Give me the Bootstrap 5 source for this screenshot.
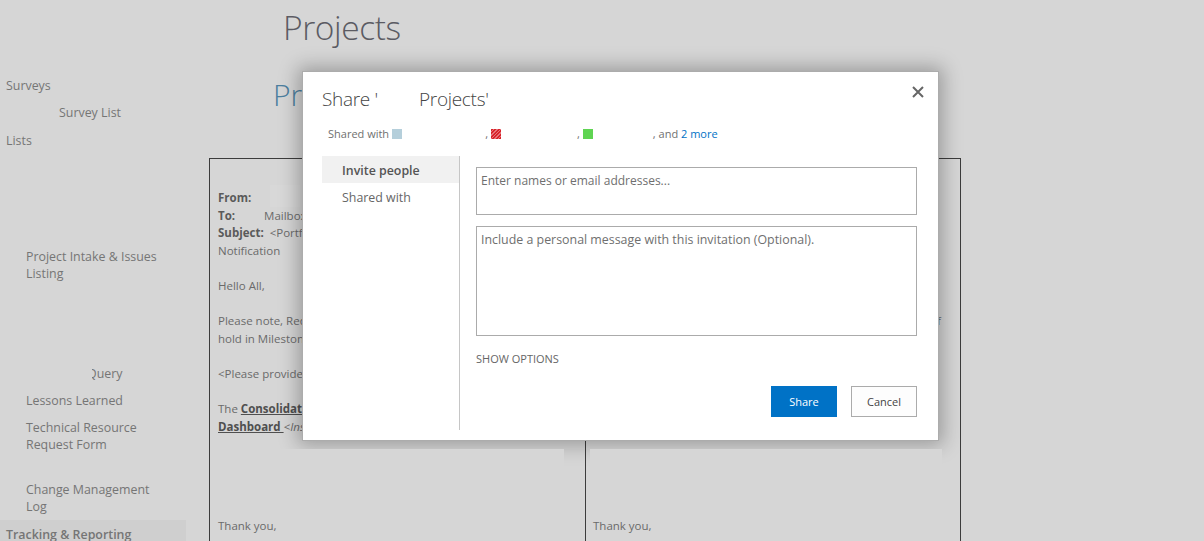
<!DOCTYPE html>
<html lang="en">
<head>
<meta charset="utf-8">
<title>Share Projects</title>
<link href="https://cdn.jsdelivr.net/npm/bootstrap@5.3.0/dist/css/bootstrap.min.css" rel="stylesheet">
<style>
html,body{height:541px;overflow:hidden}
body{background:#d6d6d6;font-family:"Open Sans","Noto Sans","Liberation Sans",sans-serif;font-size:12.4px;color:#757575;position:relative}
.page-wrap{height:541px;overflow:hidden}
.side-col{width:186px;flex:none;padding-top:77px;line-height:17px}
.side-item{padding-left:26px}
.side-top{padding-left:6px}
.side-sub{padding-left:59px;margin-top:10px}
.side-lists{margin-top:11px}
.side-intake{margin-top:99px}
.side-query{margin:83px 0 0 87px;position:relative}
.side-query::before{content:"";position:absolute;left:-2px;top:0;width:7px;height:17px;background:#d6d6d6}
.side-lessons{margin-top:10px}
.side-tech{margin-top:10px}
.side-change{margin-top:28px}
.side-track{margin-top:5px;padding:6px 6px 0;background:#cfcfcf;font-weight:600;height:30px}
.main-col{width:775px;flex:none}
.site-title{font-size:33.5px;font-weight:300;color:#5b5b63;margin:4px 0 0 97px;line-height:46px;letter-spacing:-.4px}
.sub-title{font-size:30px;font-weight:300;color:#4d7f9f;margin:22px 0 0 87px;line-height:46px}
.mail-box{margin:40px 0 0 23px;width:752px;border:1px solid #3c3c3c;height:420px}
.mail-cell{width:375px;flex:none;padding:30px 8px 0;font-size:11.5px;line-height:17.6px;color:#6a6a6a;position:relative}
.mail-cell+.mail-cell{border-left:1px solid #3c3c3c;width:376px;padding-left:7px}
.mail-cell b{color:#5a5a5a;font-weight:700}
.mail-cell u{color:#4f4f4f;font-weight:700}
.from-patch{background:#d8d8d8;width:30px;height:22px;position:absolute;left:60px;top:26px}
.foot-patch{background:#d6d6d6;height:22px;position:absolute;top:290px;z-index:2}
.mail-thanks{position:absolute;top:358px}
.to-gap{padding-left:26px}
.tail-line{padding-top:123px;text-align:right;margin-right:12px}
.share-dlg{position:absolute;z-index:1;left:302px;top:71px;width:637px;height:370px;background:#fff;border:1px solid #acacac;border-radius:0;box-shadow:0 0 18px 4px rgba(0,0,0,.28);padding:0 21px 0 19px;color:#666}
.dlg-title{font-size:19px;font-weight:300;color:#444;margin:15px 0 0;line-height:25px;letter-spacing:-.3px;white-space:nowrap}
.dlg-title span{display:inline-block;margin-left:41px}
.dlg-x{position:absolute;right:14px;top:14px;width:12px;height:12px;padding:0;background:none;border:0;line-height:0}
.shared-line{margin:13px 0 0 6px;font-size:11px;line-height:17px;height:17px;color:#707070;white-space:nowrap}
.chip{display:inline-block;width:10px;height:10px;vertical-align:-1px;margin-left:3px}
.chip-blue{background:#b5cfdb}
.chip-red{background:repeating-linear-gradient(135deg,#d8232a 0 1.5px,#e8737a 1.5px 2.5px)}
.chip-green{background:#5fd452}
.gap-a{margin-left:83px}.gap-b{margin-left:76px}.gap-c{margin-left:60px}
.shared-line a{color:#0072c6;text-decoration:none}
.dlg-body{margin-top:14px;height:274px}
.dlg-tabs{width:138px;flex:none;border-right:1px solid #c6c6c6}
.dlg-tab{display:block;padding:1px 0 0 20px;height:27px;line-height:27px;font-size:12.4px;color:#666;text-decoration:none}
.dlg-tab.sel{background:#f1f1f1;font-weight:600;color:#555}
.dlg-form{padding:11px 0 0 16px;flex:1;min-width:0}
.dlg-form .form-control{border:1px solid #ababab;border-radius:0;padding:3px 4px;line-height:19px;color:#444;resize:none;box-shadow:none}
.dlg-form .form-control::placeholder{color:#6f6f6f;opacity:1}
.in-names{height:48px;font-size:12px}
.in-msg{height:110px;margin-top:11px;font-size:12.4px}
.show-opt{margin-top:15px;font-size:11px;line-height:16px;color:#666}
.dlg-actions{margin-top:19px;gap:14px}
.dlg-btn{width:66px;height:31px;border-radius:0;font-size:11px;padding:0;line-height:29px}
.dlg-btn.go{background:#0072c6;border:1px solid #0072c6;color:#fff}
.dlg-btn.stop{background:#fdfdfd;border:1px solid #ababab;color:#444}
</style>
</head>
<body>
<div class="page-wrap d-flex">
  <nav class="side-col">
    <div class="side-top">Surveys</div>
    <div class="side-sub">Survey List</div>
    <div class="side-top side-lists">Lists</div>
    <div class="side-item side-intake">Project Intake &amp; Issues<br>Listing</div>
    <div class="side-query">Query</div>
    <div class="side-item side-lessons">Lessons Learned</div>
    <div class="side-item side-tech">Technical Resource<br>Request Form</div>
    <div class="side-item side-change">Change Management<br>Log</div>
    <div class="side-track">Tracking &amp; Reporting</div>
  </nav>
  <main class="main-col">
    <h1 class="site-title">Projects</h1>
    <h2 class="sub-title">Projects</h2>
    <div class="mail-box d-flex">
      <div class="mail-cell">
        <div class="from-patch"></div>
        <div class="text-nowrap"><b>From:</b></div>
        <div class="text-nowrap"><b>To:</b> <span class="to-gap">Mailbox</span></div>
        <div class="text-nowrap"><b>Subject:</b>&nbsp; &lt;Portfolio&gt;</div>
        <div>Notification</div>
        <div>&nbsp;</div>
        <div>Hello All,</div>
        <div>&nbsp;</div>
        <div class="text-nowrap">Please note, Request</div>
        <div class="text-nowrap">hold in Milestone</div>
        <div>&nbsp;</div>
        <div class="text-nowrap">&lt;Please provide details&gt;</div>
        <div>&nbsp;</div>
        <div class="text-nowrap">The <u>Consolidated</u></div>
        <div class="text-nowrap"><u>Dashboard </u><i>&lt;Insert&gt;</i></div>
        <div class="foot-patch" style="left:70px;width:284px"></div>
        <div class="mail-thanks">Thank you,</div>
      </div>
      <div class="mail-cell">
        <div class="tail-line">of</div>
        <div class="foot-patch" style="left:4px;width:352px"></div>
        <div class="mail-thanks">Thank you,</div>
      </div>
    </div>
  </main>
</div>

<section class="share-dlg" role="dialog" aria-label="Share Projects">
  <h3 class="dlg-title">Share '<span>Projects'</span></h3>
  <button type="button" class="dlg-x" aria-label="Close"><svg width="12" height="12" viewBox="0 0 12 12"><path d="M1 1 11 11M11 1 1 11" stroke="#666" stroke-width="2" fill="none"/></svg></button>
  <div class="shared-line">Shared with<i class="chip chip-blue"></i><span class="gap-a">,</span><i class="chip chip-red"></i><span class="gap-b">,</span><i class="chip chip-green"></i><span class="gap-c">, and</span> <a href="#">2 more</a></div>
  <div class="dlg-body d-flex">
    <div class="dlg-tabs">
      <a class="dlg-tab sel" href="#">Invite people</a>
      <a class="dlg-tab" href="#">Shared with</a>
    </div>
    <form class="dlg-form">
      <textarea class="form-control in-names" placeholder="Enter names or email addresses..."></textarea>
      <textarea class="form-control in-msg" placeholder="Include a personal message with this invitation (Optional)."></textarea>
      <div class="show-opt">SHOW OPTIONS</div>
      <div class="dlg-actions d-flex justify-content-end">
        <button type="button" class="btn dlg-btn go">Share</button>
        <button type="button" class="btn dlg-btn stop">Cancel</button>
      </div>
    </form>
  </div>
</section>
<script src="https://cdn.jsdelivr.net/npm/bootstrap@5.3.0/dist/js/bootstrap.bundle.min.js"></script>
</body>
</html>
